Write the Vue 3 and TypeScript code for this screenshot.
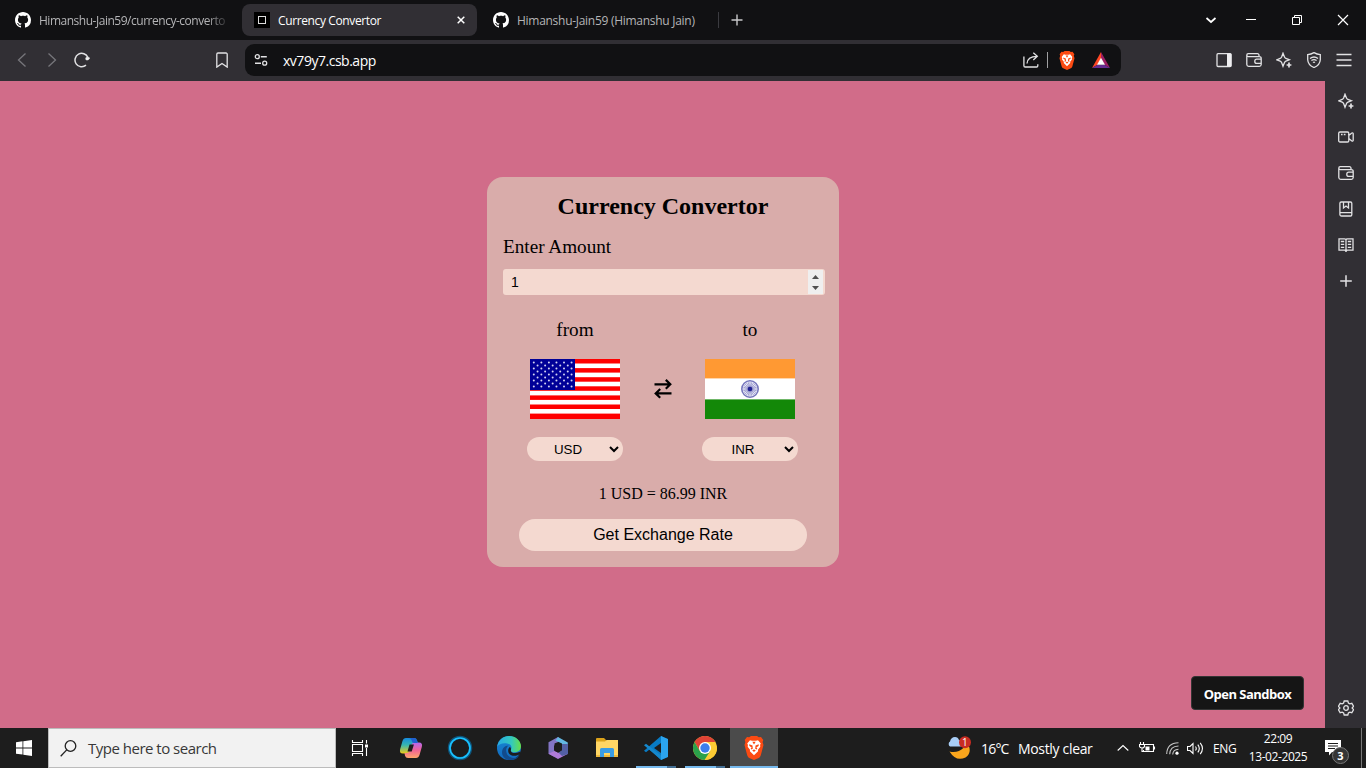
<script setup lang="ts">
import { ref, computed } from 'vue'

const amount = ref(1)
const rate = 86.99
const from = ref('USD')
const to = ref('INR')
const result = computed(() => `${amount.value} ${from.value} = ${rate} ${to.value}`)

const sideIcons = ['sparkle', 'video', 'wallet', 'bookmarks', 'reader', 'plus']
const toolIcons = ['panel', 'wallet', 'sparkle', 'vpn', 'menu']

const stars: { x: number; y: number }[] = []
for (let r = 0; r < 9; r++) {
  const n = r % 2 ? 5 : 6
  for (let c = 0; c < n; c++) stars.push({ x: 3.8 + c * 7.55 + (r % 2 ? 3.77 : 0), y: 3.4 + r * 3.02 })
}
const spokes = Array.from({ length: 24 }, (_, i) => i * 15)
</script>

<template>
  <div class="screen">
    <svg class="defs" width="0" height="0">
      <symbol id="github" viewBox="0 0 16 16">
        <path fill="#fff" d="M8 0C3.58 0 0 3.58 0 8c0 3.54 2.29 6.53 5.47 7.59.4.07.55-.17.55-.38 0-.19-.01-.82-.01-1.49-2.01.37-2.53-.49-2.69-.94-.09-.23-.48-.94-.82-1.13-.28-.15-.68-.52-.01-.53.63-.01 1.08.58 1.23.82.72 1.21 1.87.87 2.33.66.07-.52.28-.87.51-1.07-1.78-.2-3.64-.89-3.64-3.95 0-.87.31-1.59.82-2.15-.08-.2-.36-1.02.08-2.12 0 0 .67-.21 2.2.82.64-.18 1.32-.27 2-.27s1.36.09 2 .27c1.53-1.04 2.2-.82 2.2-.82.44 1.1.16 1.92.08 2.12.51.56.82 1.27.82 2.15 0 3.07-1.87 3.75-3.65 3.95.29.25.54.73.54 1.48 0 1.07-.01 1.93-.01 2.2 0 .21.15.46.55.38A8.01 8.01 0 0 0 16 8c0-4.42-3.58-8-8-8z" />
      </symbol>
      <symbol id="lion" viewBox="0 0 20 24">
        <path fill="#fb4a12" d="M5.2 1.2 7 0h6l1.800 1.200L17 1l2.300 3-.7 2 .9 3-2.700 10.200c-.4 1.300-1 2-2 2.700L10 24l-4.800-2.100c-1-.7-1.600-1.400-2-2.700L.5 9l.9-3-.7-2L3 1z" />
        <path fill="#fff" d="M6 4.200 8 4.700h4l2-.5 2.800 3.300-.7 1.200.2 2-2.300 3 .1 1.600L10 19.300l-4.100-4 .1-1.600-2.300-3 .2-2-.7-1.200z" />
        <path fill="#fb4a12" d="m5.200 8.300 3.300 1.100.3 3.400-1.600.8-.5-1.100 1-1-2.300-1.600zm9.600 0-3.300 1.100-.3 3.400 1.600.8.5-1.100-1-1 2.300-1.600zM8.200 14.300 10 13.600l1.800.7L10 16zM8.300 5.700h3.400L10 8.400z" />
      </symbol>
      <symbol id="sparkle" viewBox="0 0 16 16">
        <path d="M7 1.200 8.500 5q.4 1 1.400 1.400L13.400 7.800l-3.500 1.400q-1 .4-1.400 1.400L7 14.300l-1.400-3.700q-.4-1-1.400-1.400L.7 7.800l3.500-1.400Q5.200 6 5.600 5z" />
        <path d="M13 10.600v4.800M10.600 13h4.800" stroke-width="1.700" />
      </symbol>
      <symbol id="wallet" viewBox="0 0 16 16">
        <path d="M13 4.600V3.200a1.500 1.500 0 0 0-1.500-1.500H2.200A1.500 1.500 0 0 0 .8 3.200v9.300A1.900 1.900 0 0 0 2.700 14.300h10.600a1.900 1.900 0 0 0 1.900-1.800V6.400a1.800 1.800 0 0 0-1.900-1.800H2.500A1.500 1.500 0 0 1 .8 3.200M15 7.200h-4.200a2 2 0 0 0-2 2v.2a2 2 0 0 0 2 2H15" />
      </symbol>
      <symbol id="video" viewBox="0 0 16 16">
        <path d="M2 3h7.500a1.300 1.300 0 0 1 1.300 1.300v7.400A1.300 1.300 0 0 1 9.500 13H2A1.300 1.300 0 0 1 .7 11.700V4.300A1.300 1.300 0 0 1 2 3zM10.800 6.500l3-2.500q1.400-.5 1.400.8v6.400q0 1.300-1.400.8l-3-2.500M3 5.500h1.600M5.800 5.500h1.700" />
      </symbol>
      <symbol id="bookmarks" viewBox="0 0 16 16">
        <path d="M3.200 1h9.300a1.300 1.300 0 0 1 1.300 1.300v11.400a1.300 1.300 0 0 1-1.300 1.300H3.500a1.600 1.600 0 0 1-1.600-1.600V2.300A1.300 1.300 0 0 1 3.200 1zM2 11.600h11.800M5.500 1v6L8 5l2.500 2V1" />
      </symbol>
      <symbol id="reader" viewBox="0 0 16 16">
        <path d="M1 1.800h5.500Q8 1.800 8 3q0-1.200 1.500-1.200H15v11.400H9.600Q8 13.200 8 15q0-1.800-1.600-1.800H1zM8 3v11M2.800 4.500h3.400M2.800 7.400h3.400M2.800 10.300h3.400M9.800 4.500h3.400M9.800 7.400h3.400M9.800 10.300h3.400" />
      </symbol>
      <symbol id="plus" viewBox="0 0 16 16"><path d="M8 2.200v11.600M2.200 8h11.600" stroke-width="1.500" /></symbol>
      <symbol id="panel" viewBox="0 0 16 16">
        <rect x="1" y="1.700" width="14" height="12.800" rx="1" />
        <path d="M11 1.500h3.500q1 0 1 1v11.200q0 1-1 1H11z" fill="#eeeef0" stroke="none" />
      </symbol>
      <symbol id="vpn" viewBox="0 0 16 16">
        <path d="M8 .6q3 1.700 6.300 2.100v5Q14 13 8 15.500 2 13 1.700 7.700v-5Q5 2.300 8 .6z" />
        <path d="M4 6.500q4-2.900 8 0M5.400 8.500q2.600-1.700 5.200 0M7 10.500q1-.7 2 0" stroke-width="1.400" />
      </symbol>
      <symbol id="menu" viewBox="0 0 16 16"><path d="M.5 2.500h15M.5 8h15M.5 13.500h15" stroke-width="1.300" /></symbol>
    </svg>

    <header class="tabs">
      <div class="tab first"><svg class="fav"><use href="#github" /></svg><span class="fade t1">Himanshu-Jain59/currency-converto</span></div>
      <div class="tab active">
        <svg class="fav" viewBox="0 0 16 16"><rect width="16" height="16" fill="#000" /><rect x="4.500" y="4.500" width="7" height="7" fill="none" stroke="#ddd" /></svg>
        <span class="t2">Currency Convertor</span>
        <svg class="close" width="8" height="8" viewBox="0 0 8 8"><path d="m.7.7 6.600 6.600M7.300.7.7 7.300" stroke="#fff" stroke-width="1.500" /></svg>
      </div>
      <div class="tab third"><svg class="fav"><use href="#github" /></svg><span class="t3">Himanshu-Jain59 (Himanshu Jain)</span></div>
      <i class="tab-line"></i>
      <svg class="new" width="12" height="12" viewBox="0 0 12 12"><path d="M6 .5v11M.5 6h11" stroke="#c8c8ca" stroke-width="1.400" /></svg>
      <div class="window">
        <svg viewBox="0 0 12 12"><path d="m1.500 4 4.500 4 4.500-4" stroke="#fff" stroke-width="1.700" fill="none" /></svg>
        <svg viewBox="0 0 12 12"><path d="M1 5.500h10" stroke="#fff" /></svg>
        <svg viewBox="0 0 12 12"><path d="M1.500 3.500h7v7h-7zM3.500 3V1.500h7v7H9" stroke="#fff" fill="none" /></svg>
        <svg viewBox="0 0 12 12"><path d="m1 1 10 10M11 1 1 11" stroke="#fff" stroke-width="1.200" /></svg>
      </div>
    </header>

    <nav class="toolbar">
      <svg class="back" width="16" height="16" viewBox="0 0 16 16"><path d="M11.500 1.500 4.500 8l7 6.500" /></svg>
      <svg class="forward" width="16" height="16" viewBox="0 0 16 16"><path d="m4.500 1.500 7 6.500-7 6.500" /></svg>
      <svg class="reload" width="16" height="16" viewBox="0 0 16 16"><path d="M12 13.200A6.700 6.700 0 1 1 13.900 5.500" stroke-width="1.500" /><path d="M11.700 6.300q0-1 1-1h1.800q1 0 1 1v.4L14 8h-1.300q-1 0-1-1z" fill="#eee" stroke="#eee" stroke-width=".5" /></svg>
      <svg class="mark" width="16" height="16" viewBox="0 0 16 16"><path d="M4 1h8a1.200 1.200 0 0 1 1.200 1.200v12.900L8 11.500l-5.200 3.600V2.200A1.200 1.200 0 0 1 4 1z" /></svg>
      <div class="address">
        <svg class="site" width="14" height="14" viewBox="0 0 14 14"><circle cx="3.300" cy="3.700" r="2" /><circle cx="10.700" cy="10.200" r="2" /><path d="M6.800 3.700h6M1 10.200h6" stroke-width="1.500" /></svg>
        <span class="url">xv79y7.csb.app</span>
        <svg class="share" width="16" height="16" viewBox="0 0 16 16"><path d="M.9 4.500v9.300q0 1.200 1.200 1.200h11.500q1.200 0 1.200-1.200v-1.500M4 11.500Q4.300 4.500 14 4.300M10.300.8l4 3.500-4 3.700" /></svg>
        <i class="addr-line"></i>
        <svg class="shield" width="16" height="19"><use href="#lion" /></svg>
        <svg class="bat" width="18" height="16" viewBox="0 0 18 16"><path d="M9 0 0 16l5.500-3.300L9 6.500z" fill="#ff4724" /><path d="m9 0 9 16-5.500-3.300L9 6.500z" fill="#9e1f63" /><path d="M0 16h18l-5.500-3.300h-7z" fill="#662d91" /><path d="m9 5.800 4 7H5z" fill="#fff" /></svg>
      </div>
      <div class="tools"><svg v-for="name in toolIcons" :key="name" width="16" height="16"><use :href="'#' + name" /></svg></div>
    </nav>

    <section class="body">
      <main class="page">
        <form class="card" @submit.prevent>
          <h2>Currency Convertor</h2>
          <label>Enter Amount</label>
          <div class="amount"><span>{{ amount }}</span>
            <svg class="spin" width="15" height="24" viewBox="0 0 15 24"><rect width="15" height="24" fill="#efefef" /><path d="m4 9 3.500-4L11 9zM4 16h7l-3.500 4z" fill="#505050" /></svg>
          </div>
          <div class="exchange">
            <div class="side">
              <p>from</p>
              <svg class="flag" width="90" height="60" viewBox="0 0 90 60">
                <rect width="90" height="60" fill="#fff" />
                <rect v-for="i in 7" :key="i" :y="(i - 1) * 9.1" width="90" :height="i === 7 ? 5.400 : 4.500" fill="#f00" />
                <rect width="45" height="31" fill="#000097" />
                <circle v-for="(s, i) in stars" :key="'s' + i" :cx="s.x" :cy="s.y" r="1" fill="#d4d4f2" />
              </svg>
              <div class="select"><span>{{ from }}</span><svg width="10" height="8" viewBox="0 0 10 8"><path d="m1 2 4 4 4-4" /></svg></div>
            </div>
            <svg class="swap" width="18" height="20" viewBox="0 0 18 20"><path d="M.5 5.300h15.800M11.800.9l4.500 4.400-4.500 4.400M17.500 14.400H1.700M6.200 10 1.700 14.400l4.500 4.400" /></svg>
            <div class="side">
              <p>to</p>
              <svg class="flag" width="90" height="60" viewBox="0 0 90 60">
                <rect width="90" height="60" fill="#fff" /><rect width="90" height="19.400" fill="#f93" /><rect y="40.400" width="90" height="19.600" fill="#138808" />
                <circle cx="45" cy="30" r="8.200" fill="#f0f0fa" stroke="#7777bd" stroke-width="1.600" />
                <path v-for="a in spokes" :key="a" d="M45 30v-7" :transform="`rotate(${a} 45 30)`" stroke="#5555aa" stroke-width=".45" />
                <circle cx="45" cy="30" r="2.300" fill="#222292" />
              </svg>
              <div class="select"><span>{{ to }}</span><svg width="10" height="8" viewBox="0 0 10 8"><path d="m1 2 4 4 4-4" /></svg></div>
            </div>
          </div>
          <p class="result">{{ result }}</p>
          <button>Get Exchange Rate</button>
        </form>
        <a class="sandbox">Open Sandbox</a>
      </main>
      <aside>
        <svg v-for="name in sideIcons" :key="name" width="16" height="16"><use :href="'#' + name" /></svg>
        <svg class="gear" width="16" height="16" viewBox="0 0 16 16"><path d="M6.200 1h3.600l.6 2 1.400.8 2-.5 1.700 3-1.400 1.700 1.400 1.700-1.700 3-2-.5-1.400.8-.6 2H6.200l-.6-2-1.400-.8-2 .5-1.700-3L1.900 8 .5 6.300l1.700-3 2 .5L5.600 3z" /><circle cx="8" cy="8" r="2.300" /></svg>
      </aside>
    </section>

    <footer class="taskbar">
      <div class="start"><svg width="16" height="16" viewBox="0 0 16 16"><path d="m0 2.200 6.500-.9v6.200H0zM7.300 1.200 16 0v7.500H7.300zM0 8.400h6.500v6.200L0 13.700zM7.300 8.400H16V16l-8.700-1.200z" fill="#fff" /></svg></div>
      <div class="search"><svg width="17" height="17" viewBox="0 0 17 17"><circle cx="10.500" cy="6" r="5.300" /><path d="M6.700 9.900.7 16.300" /></svg><span>Type here to search</span></div>
      <div class="view"><svg width="17" height="16" viewBox="0 0 17 16"><path d="M1.500 0v2.500h10V0M1.500 16v-2.500h10V16M1.500 4.500h10v7h-10zM15.500 0v3.500M15.500 8v8" fill="none" stroke="#fff" stroke-width="1.100" /><path d="M14 4.500h3v3h-3z" fill="#fff" /></svg></div>
      <div class="apps">
        <div class="app">
          <svg width="24" height="24" viewBox="0 0 24 24">
            <defs>
              <linearGradient id="cpa" x2="0" y2="1"><stop stop-color="#168bdf" /><stop offset=".45" stop-color="#36b5b1" /><stop offset="1" stop-color="#f0cc18" /></linearGradient>
              <linearGradient id="cpb" x2="0" y2="1"><stop stop-color="#b467ef" /><stop offset=".5" stop-color="#f16495" /><stop offset="1" stop-color="#ffa66b" /></linearGradient>
            </defs>
            <path d="M7 2h8q2.300 0 3 2.300l.8 2.700H16q-2 0-2.600 2l-2 6.500q-.7 2-3 2H4Q0 17.500 1.200 13L3.500 5Q4.400 2 7 2z" fill="url(#cpa)" />
            <path d="M17 22H9q-2.300 0-3-2.300L5.500 17H8q2 0 2.600-2l2-6.500q.7-2 3-2H20q4 0 2.800 4.500l-2.300 8Q19.600 22 17 22z" fill="url(#cpb)" />
            <path d="m10.500 8.500-2 7h4.200l2.200-7z" fill="#1d1d1d" /><path d="M10 2h5q2.300 0 3 2.300l.8 2.700H15q-1.800 0-2.300-2.500T10 2z" fill="#2060d0" />
          </svg>
        </div>
        <div class="app"><svg width="26" height="26" viewBox="0 0 26 26"><circle cx="13" cy="13" r="10.600" fill="none" stroke="#096aa0" stroke-width="3.300" opacity=".7" /><circle cx="13" cy="13" r="10" fill="none" stroke="#19c2ff" stroke-width="1.700" /></svg></div>
        <div class="app">
          <svg width="24" height="24" viewBox="0 0 24 24">
            <defs><linearGradient id="eda"><stop stop-color="#27a9e5" /><stop offset=".6" stop-color="#34c9bd" /><stop offset="1" stop-color="#67df48" /></linearGradient><linearGradient id="edb" x2="0" y2="1"><stop stop-color="#1788d5" /><stop offset="1" stop-color="#1269bd" /></linearGradient></defs>
            <circle cx="12" cy="12" r="12" fill="url(#edb)" />
            <path d="M.2 10.500C1.500 3.800 6.200 0 12 0c7 0 12 5 12 10.200 0 3.700-2.800 6-6.200 6-3.300 0-4.500-1.300-4-2.200 1.600-3 .2-5.800-3.600-6.600C6 6.500 1.800 8 .2 10.500z" fill="url(#eda)" />
            <path d="M11.500 9.500C8 12 8.300 18.500 13 21c4 2 7.500.7 9.600-2C20 25 11 26 7 21.500c-4.300-5-1-12 4.500-12z" fill="#124b8c" />
            <path d="M13.800 14c-.5 3 4 4 8.700 2q1.700-.7.500 1.700c-3 3-9 2.800-11-.2-1.500-2.400-.8-5 .8-6.400q1.700 1 1 2.900z" fill="#1d1d1d" />
          </svg>
        </div>
        <div class="app">
          <svg width="24" height="24" viewBox="0 0 24 24"><path d="M12 1 2.500 6.200v11.500l6 3V7.500L15 4.800z" fill="#8375c5" /><path d="m12 1 9.800 5.500v8L16 11V7.500L9.500 4.500z" fill="#63b8e2" /><path d="M22 11v6.800L12 23l-9.500-5.200L8.500 15l4 1.500z" fill="#b07bd8" /><path d="M22 8v10l-6 2-3.500-3.500L16 14V8z" fill="#5360a4" /><path d="m12 7.500 4 2.200v4.600l-4 2.400-4-2.400V9.700z" fill="#1d1d1d" /></svg>
        </div>
        <div class="app"><svg width="22" height="20" viewBox="0 0 22 20"><path d="M0 1q0-1 1-1h7l2 2v3H0z" fill="#dba21b" /><path d="M0 3.500h9L10.500 2H22v17H0z" fill="#ffd665" /><path d="M4 19v-7.500Q4 10 5.500 10h11Q18 10 18 11.500V19h-4v-4H8v4z" fill="#399ce4" /><path d="M0 17h4v2H0zM8 17h6v2H8zM18 17h4v2h-4z" fill="#eeb93b" /></svg></div>
        <div class="app running"><svg width="24" height="24" viewBox="0 0 24 24"><path d="m17 0 6 3v18l-6 3L5.500 13.500 2 16.200l-2-1.400L17 0z" fill="#087bc4" /><path d="m0 9.200 2-1.400 15.500 12V24L0 9.200z" fill="#1688cc" /><path d="m17 0 7 3v18l-7 3z" fill="#2ba4ef" /><path d="M17 7v10l-7-5z" fill="#1d1d1d" /></svg></div>
        <div class="app running">
          <svg width="24" height="24" viewBox="0 0 24 24"><circle cx="12" cy="12" r="12" fill="#fc3" /><path d="M12 12H24A12 12 0 0 1 11.500 24z" fill="#fdcb33" /><path d="M1.600 6A12 12 0 0 1 22.400 6H12l-5.200 9z" fill="#df4336" /><path d="M1.600 6A12 12 0 0 0 11.500 24L17.200 15H6.800z" fill="#2ba14b" /><circle cx="12" cy="12" r="6" fill="#fff" /><circle cx="12" cy="12" r="4.700" fill="#3b7ded" /></svg>
        </div>
        <div class="app current"><svg width="20" height="24"><use href="#lion" /></svg></div>
      </div>
      <div class="tray">
        <div class="weather">
          <svg width="24" height="24" viewBox="0 0 24 24"><path d="M21.500 9Q25 17 18.500 21.500 9 26 2.500 15.500q8 2 14.500-4 2.500-1 4.500-2.500z" fill="#f9a51c" /><path d="M3 10.500a3 3 0 0 1 0-5Q4 1 8 1q3 0 4 3 4 .5 4 4 0 2.500-3 2.500z" fill="#a9cef7" /><circle cx="18" cy="6.200" r="6" fill="#c92c22" /></svg>
          <b>1</b>
        </div>
        <span class="temp">16°C</span><span class="cond">Mostly clear</span>
        <svg class="up" width="12" height="8" viewBox="0 0 12 8"><path d="m.7 6.500 5.300-5 5.300 5" /></svg>
        <svg class="battery" width="17" height="12" viewBox="0 0 17 12"><path d="M5.500 2.500h9v7h-10V8M15.500 4.500v3M1.500 0v2M4.500 0v2M.5 2.500h5v2q-.5 1.500-2.500 1.500T.5 4.500zM3 6v3.500h1.500" /><path d="M6.500 4.500h4v4h-4z" fill="#fff" stroke="none" /></svg>
        <svg class="wifi" width="13" height="13" viewBox="0 0 13 13"><path d="M.7 12Q1 1 12.500.7M3.700 12.300Q4 4.300 12.500 4M6.700 12.500Q7 7.500 12.500 7.200" stroke="#c5c5c5" /><circle cx="11" cy="11.200" r="1.600" fill="#fff" stroke="none" /></svg>
        <svg class="sound" width="17" height="13" viewBox="0 0 17 13"><path d="M.5 4.500H3l3-3v10l-3-3H.5zM8.500 4.500q1.500 2 0 4M10.800 2.700q3 3.800 0 7.600M13.200.8q4.500 5.700 0 11.400" /></svg>
        <span class="lang">ENG</span>
        <div class="clock"><span class="time">22:09</span><span class="date">13-02-2025</span></div>
        <div class="notice"><svg width="16" height="16" viewBox="0 0 16 16"><path d="M0 0h16v12H7l-3 3.500V12H0z" fill="#fff" /><path d="M3 3.500h10M3 6h10M3 8.500h7" stroke="#1d1d1d" /></svg><b>3</b></div>
        <i class="desktop"></i>
      </div>
    </footer>
  </div>
</template>

<style>
html, body { margin: 0; overflow: hidden; }
</style>

<style scoped>
* { box-sizing: border-box; }
.screen { width: 1366px; height: 768px; display: flex; flex-direction: column; overflow: hidden; font-family: "Open Sans", "Noto Sans", sans-serif; white-space: nowrap; }
.defs { position: absolute; }
svg { flex: none; display: block; }
i { display: block; flex: none; }
.tabs { height: 40px; background: #111113; display: flex; align-items: center; color: #b5b5b7; font-size: 12px; }
.tab { height: 32px; display: flex; align-items: center; gap: 8px; }
.t1 { letter-spacing: -.48px; }
.t2 { letter-spacing: -.38px; }
.t3 { letter-spacing: -.28px; }
.fav { width: 16px; height: 16px; }
.first { width: 242px; padding-left: 15px; }
.fade { width: 192px; mask-image: linear-gradient(90deg, #000 168px, transparent 192px); }
.active { width: 235px; padding: 0 12px; background: #312f34; border-radius: 8px; color: #fff; }
.close { margin-left: auto; }
.third { width: 241px; padding-left: 16px; }
.tab-line { width: 1px; height: 16px; background: #3b3b40; }
.new { margin-left: 12px; }
.window { margin-left: auto; display: flex; padding-right: 17px; gap: 34px; }
.window svg { width: 12px; height: 12px; }
.window svg:first-child { margin-right: -6px; }
.toolbar { height: 41px; background: #312f34; display: flex; align-items: center; padding: 0 14px 2px; }
.toolbar svg, aside svg { fill: none; stroke: #e2e2e4; stroke-width: 1.3; }
.toolbar .back, .toolbar .forward { stroke: #77767b; }
.forward { margin-left: 14px; }
.reload { margin-left: 14px; }
.mark { margin-left: 124px; }
.address { width: 876px; height: 32px; margin-left: 15px; margin-top: 1px; background: #111113; border-radius: 9px; display: flex; align-items: center; padding: 0 11px 0 9px; color: #fff; font-size: 14px; }
.url { margin-left: 15px; letter-spacing: -.48px; }
.share { margin-left: auto; }
.addr-line { width: 1px; height: 16px; background: #a0a0a2; margin-left: 8px; }
.shield { margin-left: 11px; }
.address .bat, .address .shield { stroke: none; }
.bat { margin-left: 17px; }
.tools { display: flex; gap: 14px; margin-left: auto; }
.body { height: 647px; display: flex; }
.page { position: relative; width: 1325px; background: #d16c89; display: flex; justify-content: center; align-items: flex-start; padding-top: 96px; padding-left: 1px; }
.card { width: 352px; height: 390px; background: #d9acaa; border-radius: 16px; padding: 16px; color: #000; font-family: "Liberation Serif", serif; display: flex; flex-direction: column; }
h2 { margin: 0; height: 28px; line-height: 27px; font-size: 24px; text-align: center; }
label { font-size: 19.2px; line-height: 20px; margin-top: 16px; }
.amount { width: 322px; height: 26px; margin-top: 12px; background: #f4d9d0; border-radius: 3px; font: 14px "Liberation Sans", sans-serif; display: flex; align-items: center; justify-content: space-between; padding: 0 2px 0 8px; }
.amount span { margin-top: -1px; }
.exchange { display: flex; justify-content: space-between; align-items: flex-start; margin-top: 25px; padding: 0 25px 0 24px; }
.side { width: 96px; display: flex; flex-direction: column; align-items: center; }
.side p { margin: 0; font-size: 19.2px; line-height: 20px; }
.flag { margin-top: 19px; }
.swap { margin-top: 59px; fill: none; stroke: #000; stroke-width: 2.2; }
.select { width: 96px; height: 24px; margin-top: 18px; border-radius: 12px; background: #f4d9d0; font: 13.333px "Liberation Sans", sans-serif; display: flex; align-items: center; padding-right: 4px; }
.select span { flex: 1; text-align: center; }
.select svg { fill: none; stroke: #000; stroke-width: 2; }
.result { margin: 24px 0 0; font-size: 16px; line-height: 18px; text-align: center; }
button { width: 288px; height: 32px; margin: 16px auto 0; padding: 0; border: 0; border-radius: 16px; background: #f4d9d0; color: #000; font: 16px "Liberation Sans", sans-serif; }
.sandbox { position: absolute; right: 21px; bottom: 18px; width: 113px; height: 34px; background: #151515; border: 1px solid #343434; border-radius: 4px; color: #fff; font-size: 13px; font-weight: 700; line-height: 34px; text-align: center; letter-spacing: -.5px; }
aside { width: 41px; background: #312f34; display: flex; flex-direction: column; align-items: center; gap: 20px; padding: 12px 0; }
.gear { margin-top: auto; }
.taskbar { height: 40px; background: #1d1d1d; display: flex; color: #fff; }
.start, .view { width: 48px; display: flex; align-items: center; justify-content: center; }
.view { padding-right: 1px; }
.search { width: 288px; background: #f2f2f2; border: 1px solid #bcbcbc; display: flex; align-items: center; gap: 11px; padding-left: 11px; color: #383838; font-size: 15px; letter-spacing: -.5px; }
.search svg { fill: none; stroke: #222; stroke-width: 1.3; }
.apps { display: flex; gap: 1px; margin-left: 3px; }
.app { width: 48px; height: 40px; display: flex; align-items: center; justify-content: center; }
.running { background: linear-gradient(90deg, transparent 4px, #76b9ed 4px 35px, #446f94 35px 44px, transparent 44px) 0 38px / 48px 2px no-repeat; }
.current { background: linear-gradient(#4b4b4b 38px, #76b9ed 38px); }
.tray { margin-left: auto; display: flex; align-items: center; font-size: 14px; }
.tray svg { fill: none; stroke: #fff; stroke-width: 1.1; }
.tray .weather svg, .tray .notice svg { stroke: none; }
.weather { position: relative; width: 24px; margin-right: 9px; left: -1px; }
.weather b { position: absolute; left: 15px; top: -1px; font-size: 10px; line-height: 14px; font-weight: 400; }
.temp { width: 37px; letter-spacing: -.8px; }
.cond { width: 99px; letter-spacing: -.33px; }
.battery { margin-left: 10px; }
.wifi { margin-left: 10px; }
.sound { margin-left: 8px; }
.lang { margin-left: 9px; width: 24px; font-size: 12px; letter-spacing: -.3px; }
.clock { width: 58px; margin-left: 12px; display: flex; flex-direction: column; align-items: center; font-size: 12px; line-height: 18px; letter-spacing: -.42px; }
.notice { position: relative; margin-left: 18px; width: 36px; }
.notice svg path:last-child { stroke: #1d1d1d; }
.notice b { position: absolute; left: 7px; top: 7px; width: 17px; height: 17px; border-radius: 50%; background: #353535; border: 1px solid #777; text-align: center; font-size: 11px; line-height: 15px; }
.desktop { width: 1px; height: 40px; background: #777; margin-right: 4px; }
</style>
